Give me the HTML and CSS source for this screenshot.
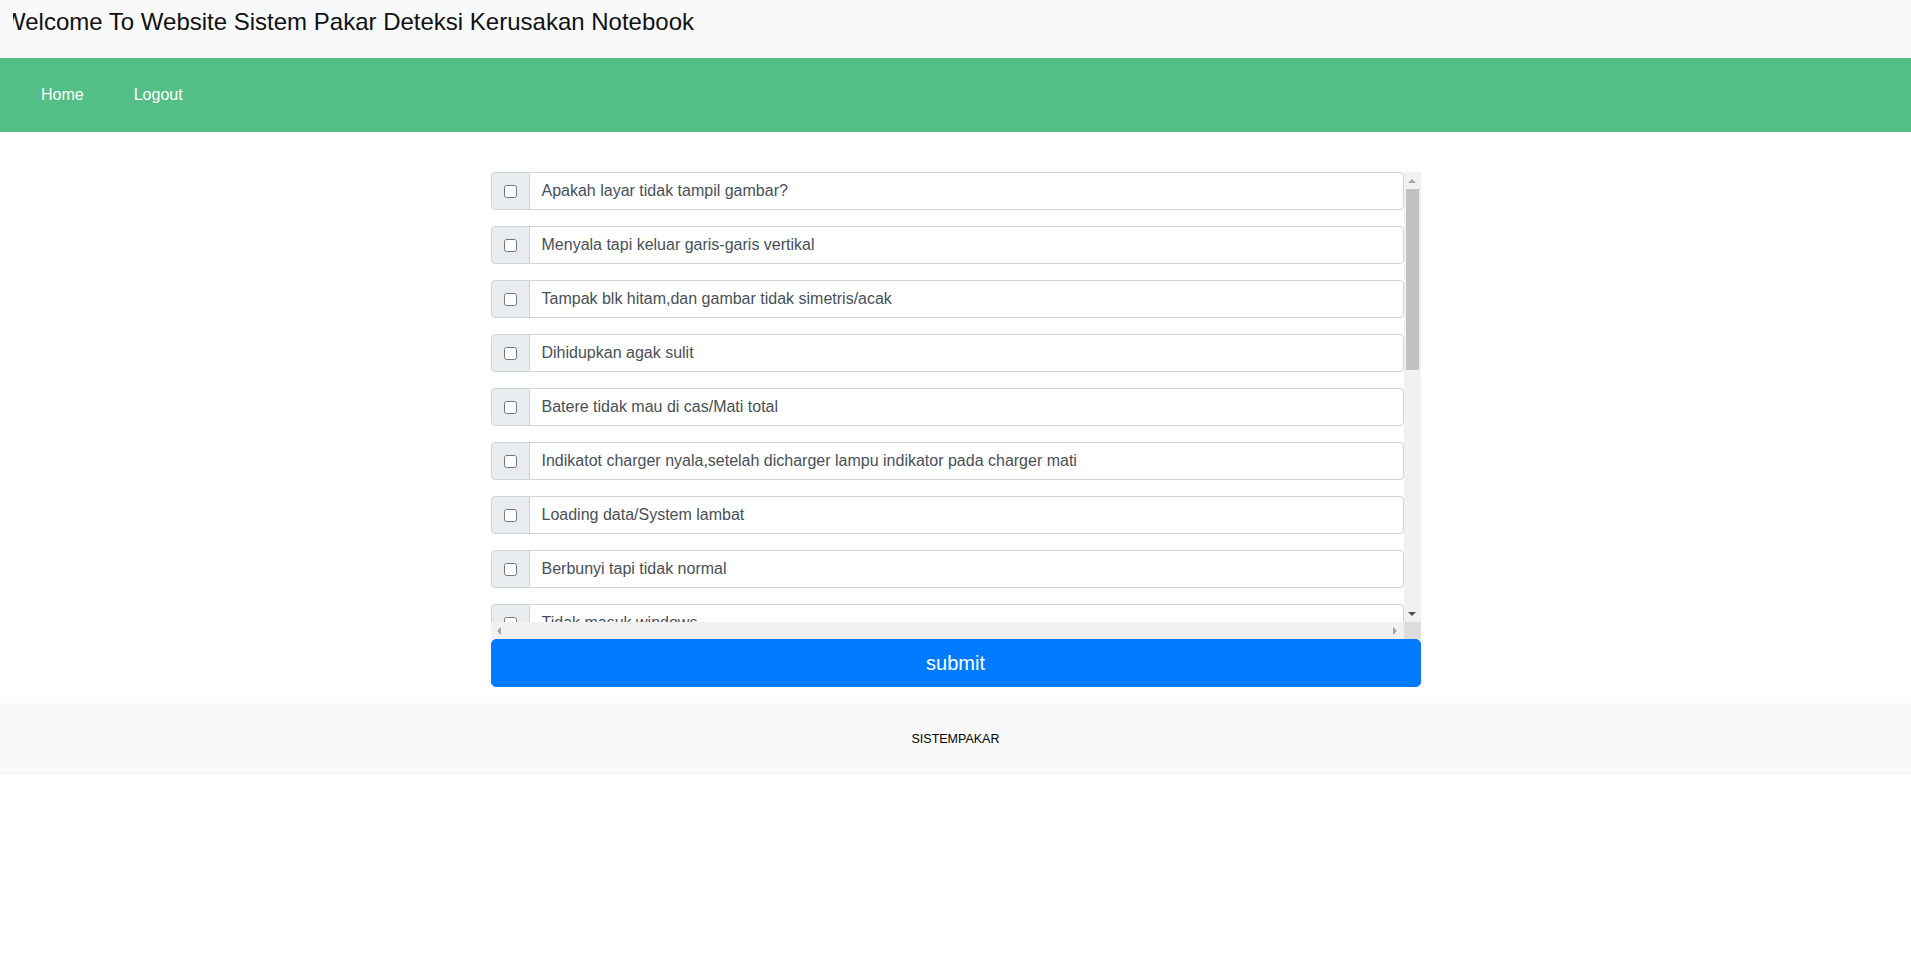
FILE: index.html
```html
<!DOCTYPE html>
<html lang="id">
<head>
<meta charset="utf-8">
<title>Sistem Pakar Deteksi Kerusakan Notebook</title>
<link rel="stylesheet" href="styles.css">
</head>
<body>
<header class="topbar">
  <div class="marquee"><span class="marquee-text">Welcome To Website Sistem Pakar Deteksi Kerusakan Notebook</span></div>
</header>
<nav class="navbar">
  <a class="nav-link" href="#">Home</a>
  <a class="nav-link" href="#">Logout</a>
</nav>
<main class="content">
  <form class="diag-form">
    <div class="scroll-frame">
      <div class="viewport">
        <div class="input-group"><label class="addon"><input type="checkbox"></label><div class="field">Apakah layar tidak tampil gambar?</div></div>
        <div class="input-group"><label class="addon"><input type="checkbox"></label><div class="field">Menyala tapi keluar garis-garis vertikal</div></div>
        <div class="input-group"><label class="addon"><input type="checkbox"></label><div class="field">Tampak blk hitam,dan gambar tidak simetris/acak</div></div>
        <div class="input-group"><label class="addon"><input type="checkbox"></label><div class="field">Dihidupkan agak sulit</div></div>
        <div class="input-group"><label class="addon"><input type="checkbox"></label><div class="field">Batere tidak mau di cas/Mati total</div></div>
        <div class="input-group"><label class="addon"><input type="checkbox"></label><div class="field">Indikatot charger nyala,setelah dicharger lampu indikator pada charger mati</div></div>
        <div class="input-group"><label class="addon"><input type="checkbox"></label><div class="field">Loading data/System lambat</div></div>
        <div class="input-group"><label class="addon"><input type="checkbox"></label><div class="field">Berbunyi tapi tidak normal</div></div>
        <div class="input-group"><label class="addon"><input type="checkbox"></label><div class="field">Tidak masuk windows</div></div>
        <div class="input-group"><label class="addon"><input type="checkbox"></label><div class="field">Keyboard tidak berfungsi</div></div>
        <div class="input-group"><label class="addon"><input type="checkbox"></label><div class="field">Touchpad tidak berfungsi</div></div>
        <div class="input-group"><label class="addon"><input type="checkbox"></label><div class="field">Notebook cepat panas</div></div>
      </div>
      <div class="vbar">
        <div class="arrow-btn"><svg width="8" height="4" viewBox="0 0 8 4"><polygon points="0,4 8,4 4,0" fill="#a3a3a3"/></svg></div>
        <div class="vtrack"><div class="vthumb"></div></div>
        <div class="arrow-btn"><svg width="8" height="4" viewBox="0 0 8 4"><polygon points="0,0 8,0 4,4" fill="#505050"/></svg></div>
      </div>
      <div class="hbar">
        <div class="arrow-btn"><svg width="4" height="8" viewBox="0 0 4 8"><polygon points="4,0 4,8 0,4" fill="#a3a3a3"/></svg></div>
        <div class="htrack"></div>
        <div class="arrow-btn"><svg width="4" height="8" viewBox="0 0 4 8"><polygon points="0,0 0,8 4,4" fill="#a3a3a3"/></svg></div>
      </div>
      <div class="corner"></div>
    </div>
    <button type="button" class="btn-submit">submit</button>
  </form>
</main>
<footer class="footer">SISTEMPAKAR</footer>
</body>
</html>
```

FILE: styles.css
```css
html, body {
  margin: 0;
  padding: 0;
  background: #fff;
  font-family: "Liberation Sans", Arial, sans-serif;
  color: #212529;
}

.topbar {
  background: #f8f9fa;
  height: 58px;
  box-sizing: border-box;
  padding: 8px 0 0 13px;
}

.marquee {
  overflow: hidden;
  white-space: nowrap;
}

.marquee-text {
  display: inline-block;
  margin-left: -10px;
  font-size: 24px;
  line-height: normal;
  color: #111;
}

.navbar {
  background: #53be85;
  height: 74px;
  display: flex;
  align-items: center;
  padding: 0 16px;
}

.nav-link {
  color: #fff;
  text-decoration: none;
  font-size: 16px;
  line-height: 24px;
  padding: 0 25px;
}

.content {
  padding-top: 40px;
}

.diag-form {
  width: 930px;
  margin: 0 auto;
}

.scroll-frame {
  display: grid;
  grid-template-columns: 913px 17px;
  grid-template-rows: 450px 17px;
}

.viewport {
  overflow: hidden;
}

.input-group {
  display: flex;
  height: 38px;
  margin-bottom: 16px;
}

.addon {
  display: flex;
  align-items: center;
  justify-content: center;
  width: 39px;
  flex: none;
  box-sizing: border-box;
  background: #e9ecef;
  border: 1px solid #ced4da;
  border-radius: 4px 0 0 4px;
  margin-right: -1px;
}

.addon input {
  margin: 0;
  width: 13px;
  height: 13px;
}

.field {
  flex: 1;
  box-sizing: border-box;
  border: 1px solid #ced4da;
  border-radius: 0 4px 4px 0;
  background: #fff;
  padding: 6px 12px;
  font-size: 16px;
  line-height: 24px;
  color: #495057;
  white-space: nowrap;
}

.vbar {
  background: #f1f1f1;
  display: flex;
  flex-direction: column;
}

.vtrack {
  flex: 1;
  display: flex;
  flex-direction: column;
  padding: 0 2px;
}

.vthumb {
  height: 181px;
  background: #c1c1c1;
}

.hbar {
  background: #f1f1f1;
  display: flex;
}

.htrack {
  flex: 1;
}

.arrow-btn {
  width: 17px;
  height: 17px;
  flex: none;
  display: flex;
  align-items: center;
  justify-content: center;
}

.corner {
  background: #dcdcdc;
}

.btn-submit {
  display: block;
  width: 100%;
  height: 48px;
  border: 1px solid #007bff;
  background: #007bff;
  color: #fff;
  font-family: "Liberation Sans", Arial, sans-serif;
  font-size: 20px;
  line-height: 30px;
  border-radius: 5px;
  padding: 8px 16px;
}

.footer {
  margin-top: 16px;
  height: 72px;
  background: #f8f9fa;
  display: flex;
  align-items: center;
  justify-content: center;
  font-size: 12.5px;
  color: #000;
}
```
